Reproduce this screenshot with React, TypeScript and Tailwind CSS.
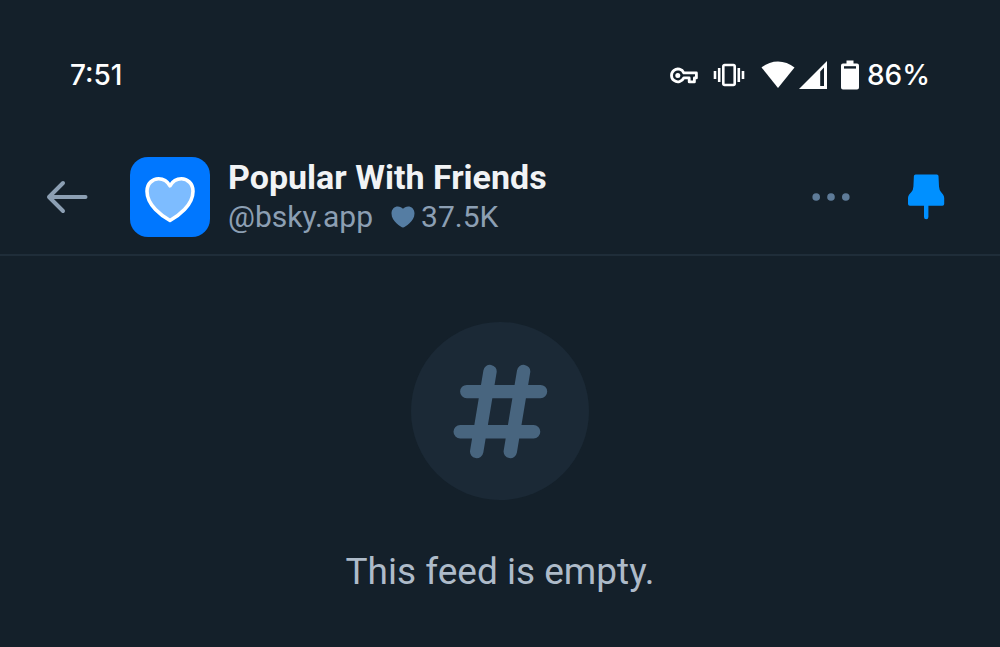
import React from "react";

function KeyIcon() {
  return (
    <svg className="h-5 w-7.5" viewBox="0 0 30 20" fill="none" stroke="#fff" strokeWidth="2.8" strokeLinejoin="round" aria-hidden="true">
      <path d="M14.8 7.9H27.4V12.9H25.4V16.9H20.2V12.9H14.8A6.4 6.4 0 1 1 14.8 7.9Z" />
      <circle cx="8.8" cy="10.4" r="2.5" fill="#fff" stroke="none" />
    </svg>
  );
}

function VibrateIcon() {
  return (
    <svg className="h-6 w-8" viewBox="0 0 32 24" fill="none" stroke="#fff" strokeWidth="2.6" aria-hidden="true">
      <rect x="10.3" y="2" width="11.4" height="20" rx="1.4" />
      <path d="M6.2 5v14M25.8 5v14M2 8v8M30 8v8" />
    </svg>
  );
}

function WifiIcon() {
  return (
    <svg className="h-7 w-8.5" viewBox="0 0 34 28" fill="#fff" aria-hidden="true">
      <path d="M0.5 6.4C10 -1.6 24 -1.6 33.5 6.4L17 27Z" />
    </svg>
  );
}

function SignalIcon() {
  return (
    <svg className="h-7 w-7" viewBox="0 0 28 28" aria-hidden="true">
      <path d="M28 0V28H0Z" fill="#fff" />
      <path d="M21.2 10.4L25 6.6V25H21.2Z" fill="#14202a" />
    </svg>
  );
}

function BatteryIcon() {
  return (
    <svg className="h-7.5 w-4.5" viewBox="0 0 18 30" aria-hidden="true">
      <path d="M5.5 0.5H12.5V3.5H16A2 2 0 0 1 18 5.5V27.5A2 2 0 0 1 16 29.5H2A2 2 0 0 1 0 27.5V5.5A2 2 0 0 1 2 3.5H5.5Z" fill="#fff" />
      <path d="M3 6.2H15V8.6H3Z" fill="#14202a" />
    </svg>
  );
}

function StatusBar() {
  return (
    <div className="flex items-center justify-between px-17.5 font-[Inter,sans-serif] text-[28px] leading-10 font-medium text-white">
      <time>7:51</time>
      <div className="flex items-center">
        <KeyIcon />
        <span className="ml-3.5 flex"><VibrateIcon /></span>
        <span className="ml-4 flex"><WifiIcon /></span>
        <span className="ml-1 flex"><SignalIcon /></span>
        <span className="mr-2 ml-3.5 flex"><BatteryIcon /></span>
        <span>86%</span>
      </div>
    </div>
  );
}

function FeedHeader() {
  return (
    <header className="flex items-center border-b-2 border-[#1f2d39] pt-[18px] pr-[55px] pb-[17px] pl-11.5">
      <button type="button" aria-label="Back" className="mr-10.5 flex">
        <svg className="h-8.5 w-10.5" viewBox="0 0 42 34" fill="none" stroke="#8c9fb3" strokeWidth="4" strokeLinecap="round" strokeLinejoin="round" aria-hidden="true">
          <path d="M17 3L3 17L17 31M3 17H39.5" />
        </svg>
      </button>
      <svg className="mr-4.5 size-20 rounded-[18px] bg-[#0077ff]" viewBox="0 0 80 80" aria-hidden="true">
        <path d="M40 63.5C32 59 17 48.5 17 34.2C17 26.5 22.5 21.8 28.6 21.8C33.6 21.8 37.6 24.6 40 28.8C42.4 24.6 46.4 21.8 51.4 21.8C57.5 21.8 63 26.5 63 34.2C63 48.5 48 59 40 63.5Z" fill="#7dbcff" stroke="#fff" strokeWidth="3.6" strokeLinejoin="round" />
      </svg>
      <div className="flex-1">
        <h1 className="text-[34px] leading-10 font-bold text-[#f1f3f5]">Popular With Friends</h1>
        <p className="flex items-center text-[30px] leading-10 text-[#8c9fb3]">
          <a href="#profile">@bsky.app</a>
          <svg className="mr-1.5 ml-4.5 h-5.5 w-6" viewBox="0 0 24 22" fill="#557da3" aria-label="Likes">
            <path d="M12 21.6C10 21 0.5 15.5 0.5 7.5C0.5 3 3.5 0.4 6.8 0.4C9 0.4 10.9 1.4 12 2.8C13.1 1.4 15 0.4 17.2 0.4C20.5 0.4 23.5 3 23.5 7.5C23.5 15.5 14 21 12 21.6Z" />
          </svg>
          <span>37.5K</span>
        </p>
      </div>
      <button type="button" aria-label="More options" className="mr-14 flex">
        <svg className="h-2 w-10" viewBox="0 0 40 8" fill="#5e7b98" aria-hidden="true">
          <circle cx="5.2" cy="4" r="3.8" />
          <circle cx="20" cy="4" r="3.8" />
          <circle cx="34.8" cy="4" r="3.8" />
        </svg>
      </button>
      <button type="button" aria-label="Unpin feed" className="flex">
        <svg className="h-11.5 w-9.5" viewBox="0 0 38 46" fill="#0090ff" aria-hidden="true">
          <path d="M8.6 0.4H29.8Q31.4 0.4 31.5 2L32 12.5Q32.2 15.8 34 18L36 20.4Q37.2 22 37.2 24V29.9Q37.2 31.7 35.4 31.7H21.4V43Q21.4 45.2 19.2 45.2T17 43V31.7H2.8Q1 31.7 1 29.9V24Q1 22 2.2 20.4L4.4 18Q6.3 15.8 6.4 12.5L6.9 2Q7 0.4 8.6 0.4Z" />
        </svg>
      </button>
    </header>
  );
}

function EmptyFeed() {
  return (
    <main className="flex flex-col items-center pt-16.5">
      <div className="flex size-[178px] items-center justify-center rounded-full bg-[#1b2936]">
        <svg className="size-24" viewBox="0 0 96 96" fill="none" stroke="#48657f" strokeWidth="13.4" strokeLinecap="round" aria-hidden="true">
          <path d="M38 8.5L24.7 88.5M71.6 8.5L58.3 88.5M14.8 28.6H88.5M8.2 68.8H81.6" />
        </svg>
      </div>
      <p className="mt-12 text-[37px] leading-12 text-[#aebbc9]">This feed is empty.</p>
    </main>
  );
}

export default function App() {
  return (
    <div className="min-h-screen bg-[#14202a] pt-[55px] pb-8 font-[Roboto,sans-serif]">
      <StatusBar />
      <div className="pt-11">
        <FeedHeader />
      </div>
      <EmptyFeed />
    </div>
  );
}
